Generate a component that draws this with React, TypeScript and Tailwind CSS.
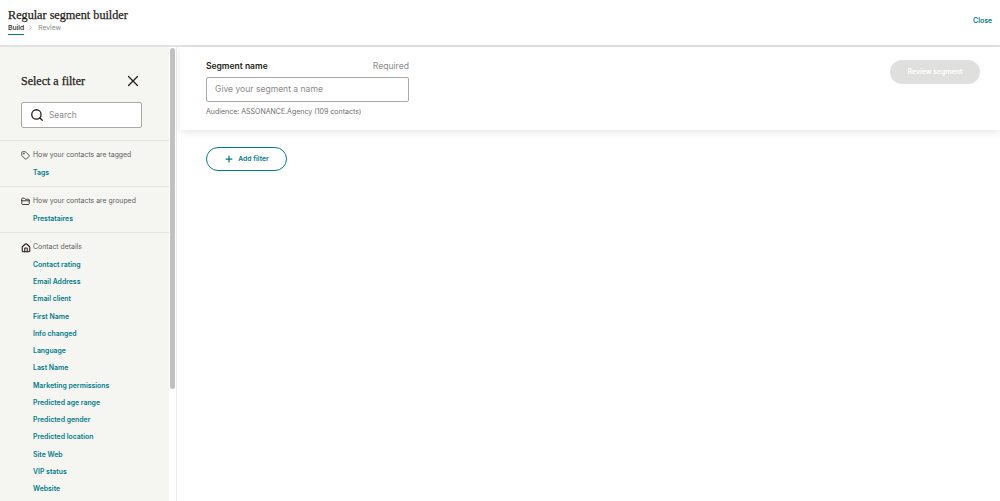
import { Search, X, Tag, FolderClosed, House, Plus, ChevronRight } from 'lucide-react'

const SANS = "font-['Inter','Liberation_Sans',sans-serif]"

const DETAILS = [
  'Contact rating',
  'Email Address',
  'Email client',
  'First Name',
  'Info changed',
  'Language',
  'Last Name',
  'Marketing permissions',
  'Predicted age range',
  'Predicted gender',
  'Predicted location',
  'Site Web',
  'VIP status',
  'Website',
]

function FilterLink({ label }: { label: string }) {
  return <div className="h-[17.25px] pl-[33px] text-[6.9px] leading-[17px] font-semibold text-[#007c89]">{label}</div>
}

function FilterGroup({ icon, title, items, last }: { icon: React.ReactNode; title: string; items: string[]; last?: boolean }) {
  return (
    <div className={`pt-[6.5px] pb-[5px] ${last ? '' : 'border-b border-[#e4e4e0]'}`}>
      <div className="flex h-[16.25px] items-center pl-[21px] text-[6.9px] text-[#5f5f5f]">
        <span className="flex w-[12px] items-center text-[#241c15]">{icon}</span>
        {title}
      </div>
      {items.map(item => <FilterLink key={item} label={item} />)}
    </div>
  )
}

export default function App() {
  return (
    <div className={`flex h-[501px] w-[1000px] flex-col overflow-hidden bg-white ${SANS}`}>
      {/* Header */}
      <header className="flex h-[47px] shrink-0 items-start justify-between border-b-2 border-[#e3e3e3] pl-[8px] pr-[8px]">
        <div>
          <h1 className="mt-[7px] font-['Liberation_Serif',serif] text-[12.2px] leading-[16px] text-[#241c15] [-webkit-text-stroke:0.25px_#241c15]">
            Regular segment builder
          </h1>
          <div className="flex items-start text-[6.8px] leading-[9px]">
            <span className="border-b-[1.5px] border-[#007c89] pb-[2px] font-medium text-[#241c15]">Build</span>
            <ChevronRight className="mx-[3px] mt-[1px] h-[7px] w-[7px] text-[#8a8a8a]" />
            <span className="ml-[1px] text-[#8a8a8a]">Review</span>
          </div>
        </div>
        <button className="mt-[16px] text-[6.9px] leading-[10px] font-semibold text-[#007c89]">Close</button>
      </header>

      <div className="flex min-h-0 flex-1">
        {/* Filter sidebar */}
        <aside className="flex w-[177px] shrink-0 border-r border-[#ececec]">
          <div className="w-[169px] shrink-0 overflow-hidden bg-[#f5f5f1]">
            <div className="flex h-[94px] flex-col border-b border-[#e4e4e0] pl-[21px] pr-[27px]">
              <div className="mt-[24px] flex h-[20px] items-center justify-between">
                <h2 className="font-['Liberation_Serif',serif] text-[12px] text-[#241c15] [-webkit-text-stroke:0.25px_#241c15]">Select a filter</h2>
                <X className="h-[18px] w-[18px] text-[#241c15]" strokeWidth={1.6} />
              </div>
              <div className="mt-[11px] flex h-[26px] w-[121px] shrink-0 items-center rounded-[2px] border border-[#a9a9a5] bg-white pl-[8px]">
                <Search className="h-[14px] w-[14px] text-[#241c15]" strokeWidth={2.2} />
                <span className="ml-[5px] text-[8.4px] text-[#8a8a8a]">Search</span>
              </div>
            </div>
            <FilterGroup icon={<Tag className="h-[9px] w-[9px]" strokeWidth={2} />} title="How your contacts are tagged" items={['Tags']} />
            <FilterGroup icon={<FolderClosed className="h-[9px] w-[9px]" strokeWidth={2.2} />} title="How your contacts are grouped" items={['Prestataires']} />
            <FilterGroup icon={<House className="h-[10px] w-[10px]" strokeWidth={2.6} />} title="Contact details" items={DETAILS} last />
          </div>
          {/* Scrollbar */}
          <div className="flex-1 bg-white pt-[1px] pl-[1px]">
            <div className="h-[341px] w-[5px] rounded-full bg-[#c1c1c1]" />
          </div>
        </aside>

        {/* Main */}
        <main className="min-w-0 flex-1 pl-[3px]">
          <section className="flex h-[83px] items-start justify-between pr-[20px] pl-[26px] shadow-[0_2px_8px_rgba(0,0,0,0.1)]">
            <div className="w-[203px]">
              <div className="mt-[13px] flex h-[12px] items-center justify-between">
                <span className="text-[8.5px] font-semibold text-[#241c15]">Segment name</span>
                <span className="text-[8.6px] text-[#8a8a8a]">Required</span>
              </div>
              <div className="mt-[5px] flex h-[25px] items-center rounded-[2px] border border-[#a9a9a5] pl-[8px] text-[8.55px] text-[#8a8a8a]">
                Give your segment a name
              </div>
              <p className="mt-[5px] text-[7px] leading-[10px] text-[#6e6e6e]">Audience: ASSONANCE.Agency (109 contacts)</p>
            </div>
            <button className="mt-[13px] h-[24px] w-[90px] rounded-full bg-[#dfdfdd] text-[6.9px] font-semibold text-white">Review segment</button>
          </section>
          <div className="pt-[17px] pl-[26px]">
            <button className="flex h-[24px] w-[81px] items-center justify-center rounded-full border border-[#007c89] text-[6.8px] font-semibold text-[#007c89]">
              <Plus className="mr-[4px] h-[10px] w-[10px]" strokeWidth={3} />
              Add filter
            </button>
          </div>
        </main>
      </div>
    </div>
  )
}
